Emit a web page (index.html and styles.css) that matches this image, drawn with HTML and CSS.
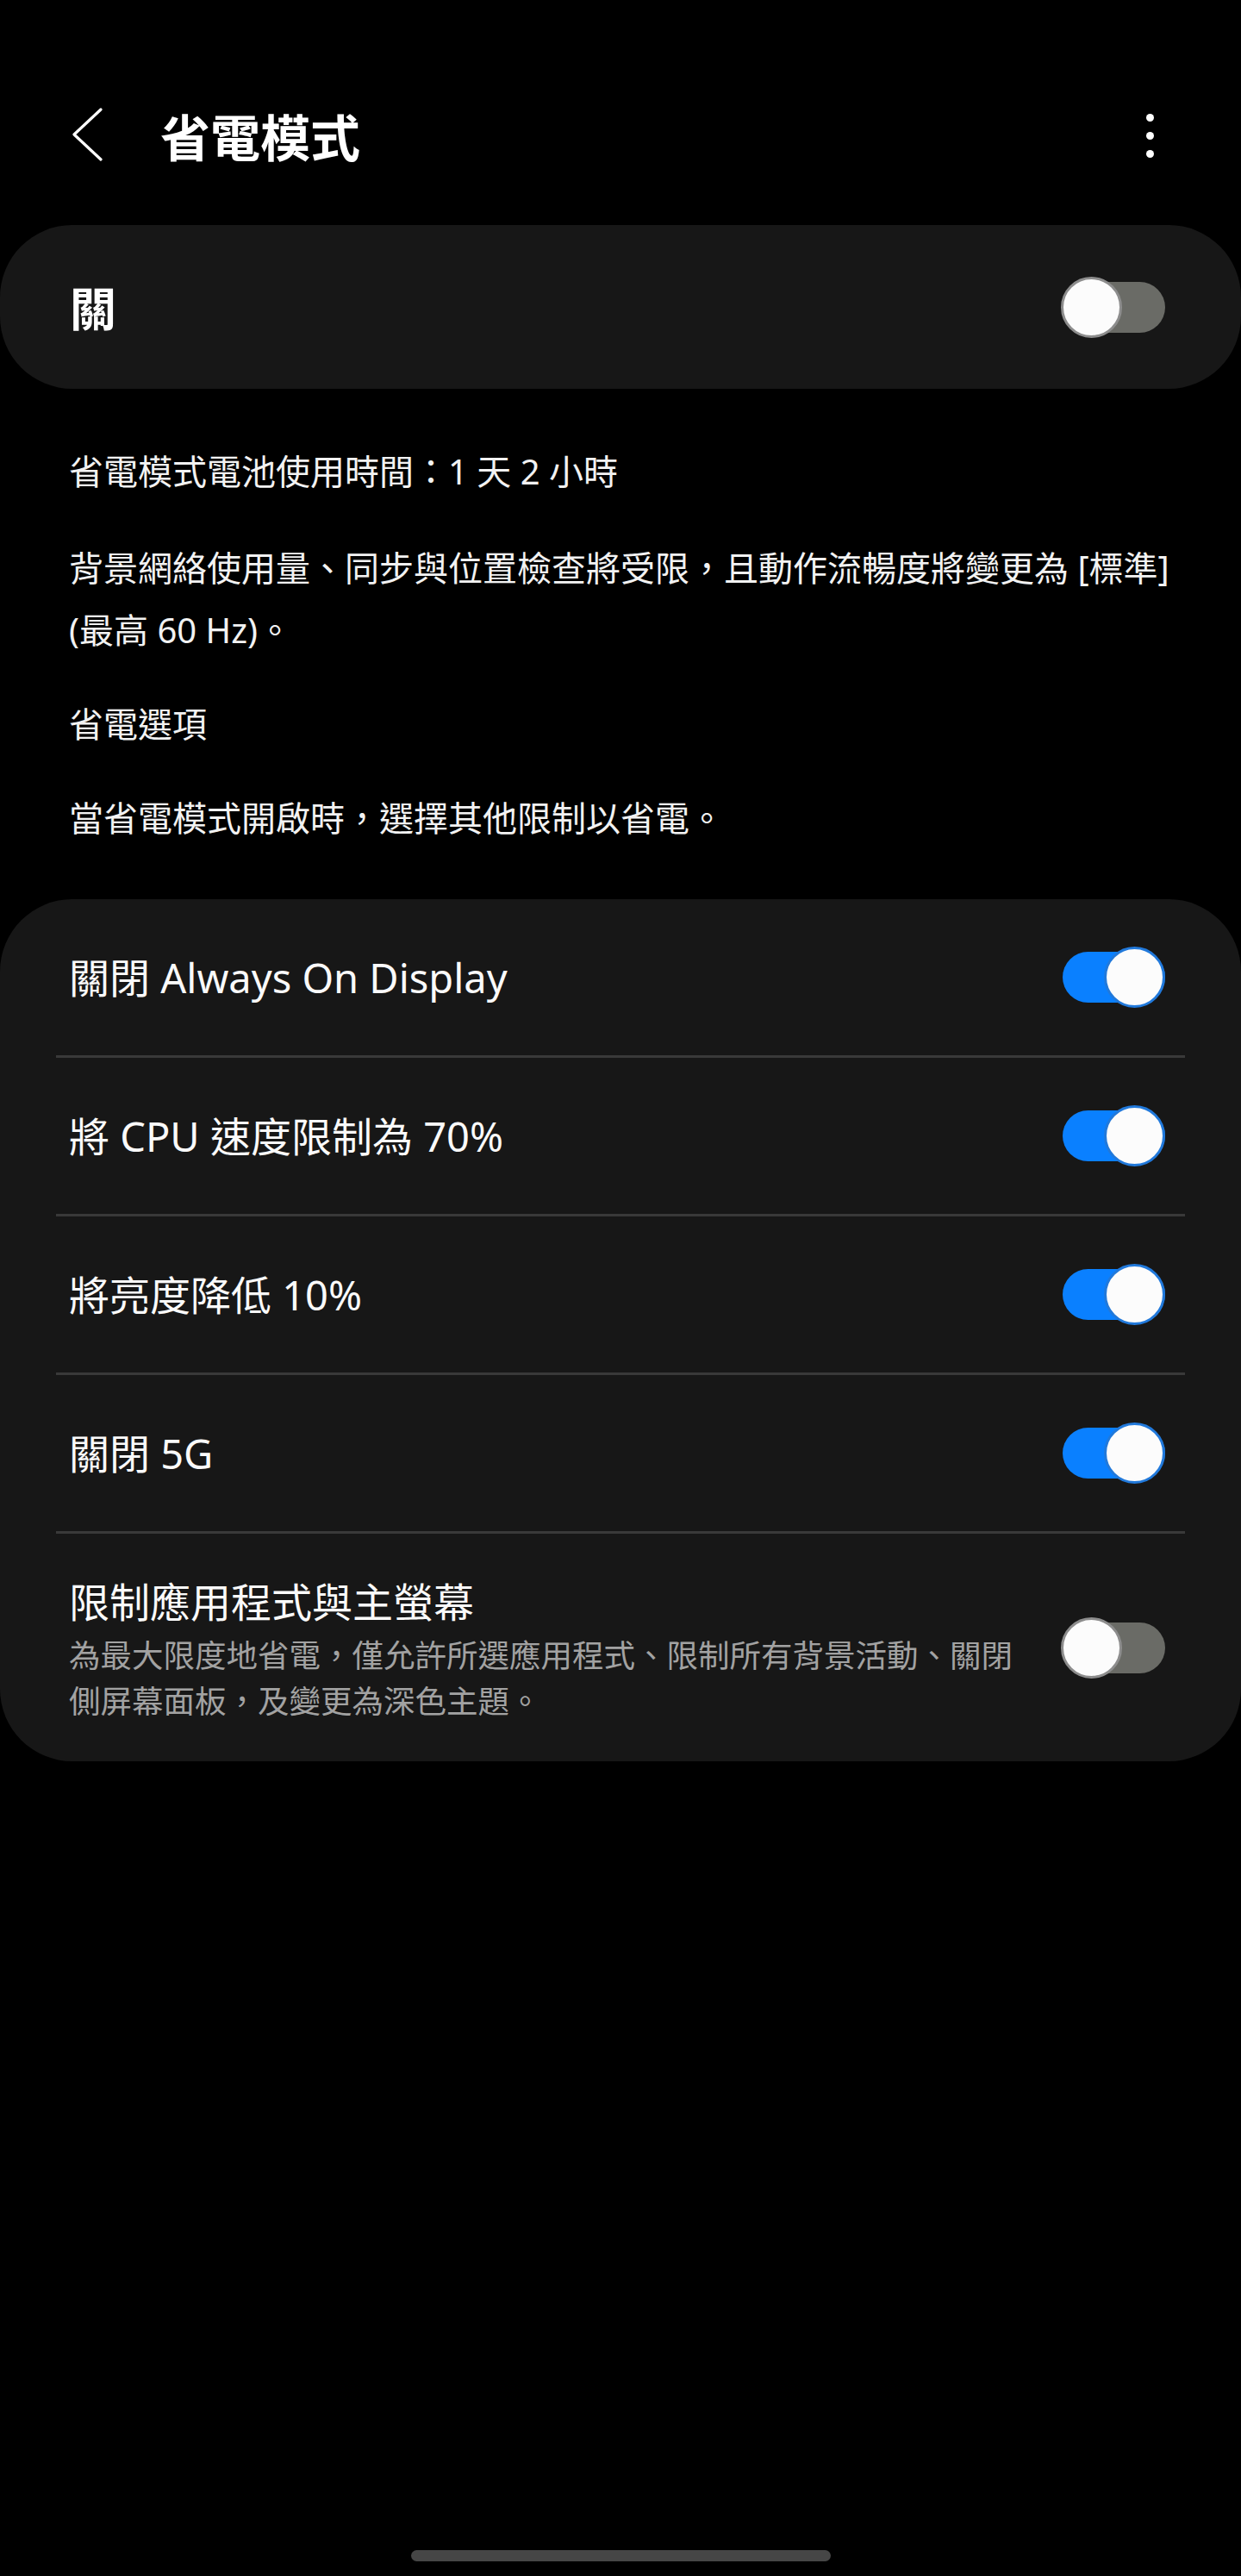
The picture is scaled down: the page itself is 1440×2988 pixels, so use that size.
FILE: index.html
```html
<!DOCTYPE html>
<html lang="zh-Hant">
<head>
<meta charset="utf-8">
<title>省電模式</title>
<link rel="stylesheet" href="styles.css">
</head>
<body>
<div class="screen">
  <header class="appbar">
    <svg class="appbar__back" width="40" height="64" viewBox="0 0 40 64" aria-label="返回">
      <polyline points="35,2 4,31 35,60" fill="none" stroke="#ffffff" stroke-width="3.2" stroke-linecap="round" stroke-linejoin="round"/>
    </svg>
    <h1 class="appbar__title">省電模式</h1>
    <div class="appbar__menu" aria-label="更多選項">
      <span class="dot"></span><span class="dot"></span><span class="dot"></span>
    </div>
  </header>

  <section class="master-card">
    <span class="master-card__label">關</span>
    <div class="switch switch--off"><span class="switch__track"></span><span class="switch__thumb"></span></div>
  </section>

  <div class="info">
    <p class="info__line info__line--first">省電模式電池使用時間：1 天 2 小時</p>
    <p class="info__line">背景網絡使用量、同步與位置檢查將受限，且動作流暢度將變更為 [標準](最高 60 Hz)。</p>
    <p class="info__line">省電選項</p>
    <p class="info__line info__line--last">當省電模式開啟時，選擇其他限制以省電。</p>
  </div>

  <section class="options">
    <div class="option">
      <span class="option__title">關閉 Always On Display</span>
      <div class="switch switch--on"><span class="switch__track"></span><span class="switch__thumb"></span></div>
    </div>
    <div class="divider"></div>
    <div class="option">
      <span class="option__title">將 CPU 速度限制為 70%</span>
      <div class="switch switch--on"><span class="switch__track"></span><span class="switch__thumb"></span></div>
    </div>
    <div class="divider"></div>
    <div class="option">
      <span class="option__title">將亮度降低 10%</span>
      <div class="switch switch--on"><span class="switch__track"></span><span class="switch__thumb"></span></div>
    </div>
    <div class="divider"></div>
    <div class="option">
      <span class="option__title">關閉 5G</span>
      <div class="switch switch--on"><span class="switch__track"></span><span class="switch__thumb"></span></div>
    </div>
    <div class="divider"></div>
    <div class="option option--tall">
      <div class="option__text">
        <div class="option__title option__title--block">限制應用程式與主螢幕</div>
        <div class="option__summary">為最大限度地省電，僅允許所選應用程式、限制所有背景活動、關閉側屏幕面板，及變更為深色主題。</div>
      </div>
      <div class="switch switch--off"><span class="switch__track"></span><span class="switch__thumb"></span></div>
    </div>
  </section>

  <div class="homebar"><span class="homebar__pill"></span></div>
</div>
</body>
</html>
```

FILE: styles.css
```css
* { box-sizing: border-box; }

html, body {
  margin: 0;
  padding: 0;
  background: #000000;
}

body {
  font-family: "Noto Sans", "Noto Sans CJK TC", sans-serif;
  color: #fafafa;
}

.screen {
  min-height: 2988px;
  display: flex;
  flex-direction: column;
}

/* App bar */
.appbar {
  margin-top: 107px;
  height: 100px;
  display: flex;
  align-items: center;
  padding: 0 101px 0 82px;
}

.appbar__back {
  display: block;
  flex: none;
}

.appbar__title {
  margin: 0 0 0 64px;
  font-family: "Noto Sans CJK TC", sans-serif;
  font-size: 58px;
  font-weight: 700;
  line-height: 100px;
  color: #ffffff;
  flex: 1;
}

.appbar__menu {
  display: flex;
  flex-direction: column;
  gap: 12px;
}

.dot {
  width: 9px;
  height: 9px;
  border-radius: 50%;
  background: #ffffff;
}

/* Master card */
.master-card {
  margin-top: 54px;
  height: 190px;
  background: #171717;
  border-radius: 84px;
  display: flex;
  align-items: center;
  justify-content: space-between;
  padding: 0 88px 0 81px;
}

.master-card__label {
  font-family: "Noto Sans CJK TC", sans-serif;
  font-size: 54px;
  font-weight: 700;
  line-height: 72px;
  color: #ffffff;
}

/* Switch */
.switch {
  position: relative;
  flex: none;
  width: 121px;
  height: 71px;
}

.switch__track {
  position: absolute;
  left: 2px;
  right: 0;
  top: 6px;
  height: 59px;
  border-radius: 30px;
}

.switch__thumb {
  position: absolute;
  top: 0;
  width: 71px;
  height: 71px;
  border-radius: 50%;
  background: #fcfcfc;
  border: 3px solid;
}

.switch--on .switch__track { background: #0a80ff; }
.switch--on .switch__thumb { right: 0; border-color: #2179db; }

.switch--off .switch__track { background: #6a6b66; }
.switch--off .switch__thumb { left: 0; border-color: #8d8d8d; }

/* Info text */
.info {
  padding: 60px 60px 0 80px;
}

.info__line {
  margin: 0 0 37px;
  font-size: 40px;
  line-height: 72px;
  color: #f2f2f2;
}

.info__line--first { margin-bottom: 40px; }
.info__line--last { margin-bottom: 0; }

/* Options card */
.options {
  margin-top: 58px;
  background: #171717;
  border-radius: 84px;
  overflow: hidden;
}

.option {
  min-height: 181px;
  display: flex;
  align-items: center;
  justify-content: space-between;
  gap: 36px;
  padding: 0 88px 0 80px;
}

.option--tall {
  min-height: 264px;
  padding-top: 43px;
  padding-bottom: 43px;
}

.option__text {
  flex: 1;
  min-width: 0;
}

.option__title {
  font-size: 47px;
  line-height: 72px;
  color: #fafafa;
}

.option__title--block { display: block; }

.option__summary {
  font-size: 36.5px;
  line-height: 53px;
  color: #a2a2a2;
}

.divider {
  height: 3px;
  margin: 0 65px;
  background: #393939;
}

/* Home indicator */
.homebar {
  margin-top: auto;
  display: flex;
  justify-content: center;
  padding-bottom: 17px;
}

.homebar__pill {
  width: 487px;
  height: 13px;
  border-radius: 7px;
  background: #464646;
}
```
